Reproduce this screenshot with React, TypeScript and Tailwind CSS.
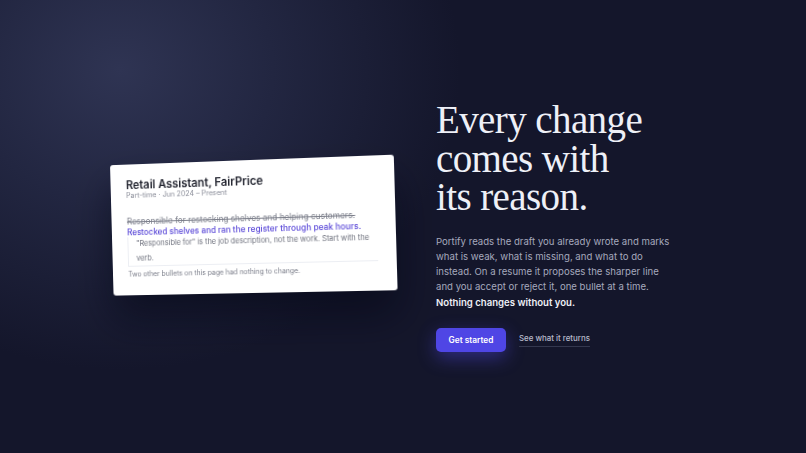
import React from 'react';

const sans = "font-['Inter','Noto_Sans',sans-serif]";
const serif = "font-['Liberation_Serif','Times_New_Roman',serif]";

const ReviewCard: React.FC = () => (
  <div className="w-[286px] shrink-0 [transform:perspective(900px)_rotateY(-7deg)_rotate(-1.6deg)]">
    <div className="bg-white rounded-[3px] pl-4 pr-[18px] pt-[15px] pb-[16px] shadow-[0_24px_40px_rgba(4,6,20,0.55)]">
      <h3 className="text-[11.4px] font-semibold text-[#22242f] leading-[12px]">Retail Assistant, FairPrice</h3>
      <p className="text-[7.2px] text-[#8a8d99] leading-[10px]">Part-time · Jun 2024 – Present</p>
      <p className="mt-[16px] text-[8.3px] text-[#7b7e8a] line-through leading-[11px]">
        Responsible for restocking shelves and helping customers.
      </p>
      <p className="text-[8.3px] font-medium text-[#5a48d8] leading-[10px]">
        Restocked shelves and ran the register through peak hours.
      </p>
      <div className="border-l border-b border-[#eceef3] pl-2 pr-px">
        <p className="text-[7.5px] text-[#6f727e] leading-[14.5px] tracking-[-0.05px]">
          "Responsible for" is the job description, not the work. Start with the verb.
        </p>
      </div>
      <p className="mt-[2px] text-[6.9px] text-[#7b7e8a] leading-[11px]">
        Two other bullets on this page had nothing to change.
      </p>
    </div>
  </div>
);

export default function App() {
  return (
    <div className={`min-h-screen bg-[#14162b] ${sans}`}>
      <section className="min-h-screen flex items-center justify-center gap-[42px] pr-[24px] bg-[radial-gradient(ellipse_340px_300px_at_120px_70px,#2f3453_0%,#222641_45%,#14162b_100%)]">
        <ReviewCard />
        <div className="w-[238px] shrink-0">
          <h1 className={`${serif} text-[39px] leading-[38.5px] tracking-[-0.6px] text-[#eef0f7]`}>
            Every change
            <br />
            comes with
            <br />
            its reason.
          </h1>
          <p className="mt-[17px] text-[9.6px] leading-[15.2px] text-[#a6a9bd]">
            Portify reads the draft you already wrote and marks what is weak, what is missing, and what
            to do instead. On a resume it proposes the sharper line and you accept or reject it, one
            bullet at a time. <strong className="font-semibold text-[#eef0f7]">Nothing changes without you.</strong>
          </p>
          <div className="mt-[18px] flex items-center gap-[13px]">
            <button className="h-6 w-[70px] rounded-[5px] bg-[#4f46e5] text-white text-[8.3px] font-semibold shadow-[0_6px_18px_rgba(79,70,229,0.45)]">
              Get started
            </button>
            <a className="text-[7.9px] font-medium text-[#b9bccd] border-b border-[#34384f] pb-px">
              See what it returns
            </a>
          </div>
        </div>
      </section>
    </div>
  );
}
